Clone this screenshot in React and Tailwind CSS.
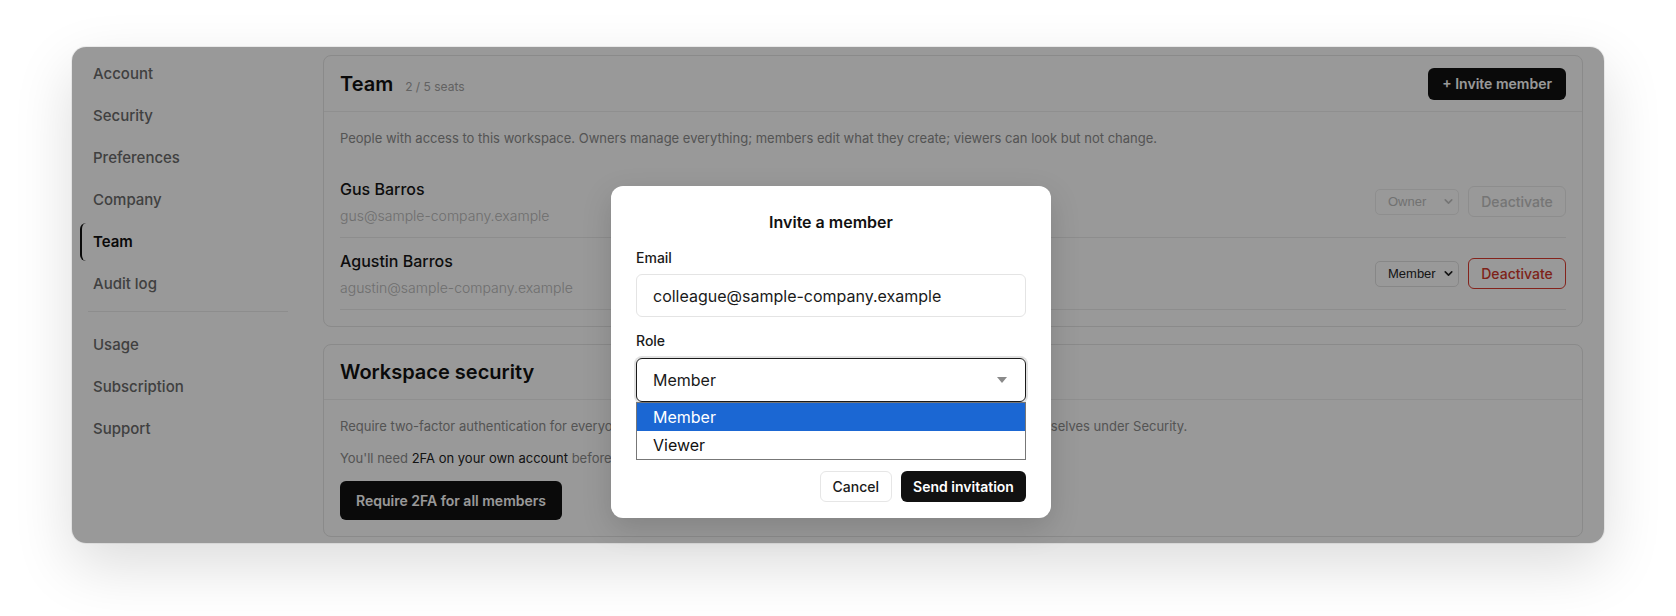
import React from 'react';
import { ChevronDown } from 'lucide-react';

const navTop = ['Account', 'Security', 'Preferences', 'Company', 'Team', 'Audit log'];
const navBottom = ['Usage', 'Subscription', 'Support'];

const members = [
  { name: 'Gus Barros', email: 'gus@sample-company.example', role: 'Owner', locked: true },
  { name: 'Agustin Barros', email: 'agustin@sample-company.example', role: 'Member', locked: false },
];

function NavItem({ label, active }) {
  return (
    <div
      className={`h-[38px] flex items-center pl-[11px] rounded-l-md border-l-2 text-[15px] ${
        active ? 'border-[#111] text-[#111] font-semibold' : 'border-transparent text-[#6b6b6b] font-medium'
      }`}
    >
      {label}
    </div>
  );
}

function MemberRow({ m }) {
  return (
    <div className="flex items-center justify-between border-b border-[#ececec] h-[72px] first:border-t">
      <div>
        <div className="text-[16px] leading-[22px] font-medium text-[#161616]">{m.name}</div>
        <div className="mt-[6px] text-[14px] leading-5 font-light text-[#b8b8b8]">{m.email}</div>
      </div>
      <div className="flex items-center gap-[9px]">
        <div
          className={`w-[84px] h-[26px] flex items-center justify-between pl-[12px] pr-[3px] rounded-[5px] border text-[13px] ${
            m.locked ? 'border-[#ededed] text-[#bdbdbd]' : 'border-[#e2e2e2] text-[#262626]'
          }`}
          style={{ fontFamily: '"Liberation Sans", Arial, sans-serif' }}
        >
          <span>{m.role}</span>
          <ChevronDown size={13} strokeWidth={3} className={m.locked ? 'text-[#c4c4c4]' : 'text-[#222]'} />
        </div>
        <button
          className={`h-[31px] w-[98px] rounded-[6px] border text-[14px] font-medium ${
            m.locked ? 'border-[#ececec] text-[#c4c4c4]' : 'border-[#dc3b2f] text-[#d33a2c]'
          }`}
        >
          Deactivate
        </button>
      </div>
    </div>
  );
}

export default function App() {
  return (
    <div className="min-h-screen bg-white pt-[47px] px-[72px] pb-[73px]" style={{ fontFamily: 'Inter, "Noto Sans", sans-serif' }}>
      <div className="relative rounded-[14px] bg-white shadow-[0_22px_60px_rgba(0,0,0,0.14),0_0_0_1px_rgba(0,0,0,0.06)] flex p-2 h-[496px]">
        {/* Sidebar */}
        <aside className="w-[220px] flex-shrink-0 flex flex-col gap-1">
          {navTop.map((l) => (
            <NavItem key={l} label={l} active={l === 'Team'} />
          ))}
          <div className="mt-1 mb-[10px] ml-2 mr-3 h-px bg-[#ececec]" />
          {navBottom.map((l) => (
            <NavItem key={l} label={l} />
          ))}
        </aside>

        {/* Main */}
        <main className="flex-1 pl-[23px] pr-[13px] flex flex-col gap-[17px]">
          <section className="rounded-lg border border-[#e6e6e6]">
            <div className="h-[56px] px-4 flex items-center justify-between border-b border-[#efefef]">
              <div className="flex items-baseline gap-3">
                <h2 className="text-[20px] font-semibold text-[#111]">Team</h2>
                <span className="text-[12px] text-[#a3a3a3]">2 / 5 seats</span>
              </div>
              <button className="h-[32px] px-[14px] rounded-[6px] bg-[#111] text-white text-[14px] font-semibold">
                + Invite member
              </button>
            </div>
            <div className="px-4 pt-4 pb-4">
              <p className="text-[13px] leading-5 text-[#8c8c8c] mb-[18px]">
                People with access to this workspace. Owners manage everything; members edit what they create; viewers can look but not change.
              </p>
              {members.map((m) => (
                <MemberRow key={m.email} m={m} />
              ))}
            </div>
          </section>

          <section className="rounded-lg border border-[#e6e6e6]">
            <div className="h-[55px] px-4 flex items-center border-b border-[#efefef]">
              <h2 className="text-[20px] font-semibold text-[#111]">Workspace security</h2>
            </div>
            <div className="px-4 pt-4 pb-4">
              <p className="text-[13px] leading-5 text-[#8c8c8c]">
                Require two-factor authentication for everyone in this workspace. Members without it will be asked to set it up themselves under Security.
              </p>
              <p className="mt-3 text-[13px] leading-5 text-[#8c8c8c]">
                You'll need <span className="text-[#222]">2FA on your own account</span> before you can turn this on.
              </p>
              <button className="mt-[13px] h-[39px] px-4 rounded-[6px] bg-[#111] text-white text-[14px] font-semibold">
                Require 2FA for all members
              </button>
            </div>
          </section>
        </main>

        {/* Overlay */}
        <div className="absolute inset-0 rounded-[14px] bg-black/40" />

        {/* Modal */}
        <div className="absolute left-[539px] top-[139px] w-[440px] h-[332px] rounded-[12px] bg-white px-[25px] pt-6 shadow-[0_10px_30px_rgba(0,0,0,0.15)]">
          <h3 className="text-center text-[16px] leading-6 font-semibold text-[#111]">Invite a member</h3>
          <label className="block mt-[14px] text-[14px] leading-5 font-medium text-[#1a1a1a]">Email</label>
          <div className="mt-[6px] h-[43px] rounded-[6px] border border-[#e4e4e4] flex items-center px-4 text-[16px] text-[#1a1a1a]">
            colleague@sample-company.example
          </div>
          <label className="block mt-[14px] text-[14px] leading-5 font-medium text-[#1a1a1a]">Role</label>
          <div className="relative mt-[7px]">
            <div className="h-[44px] rounded-[6px] border border-[#1a1a1a] shadow-[0_0_0_2px_#e2e2e2] flex items-center justify-between pl-4 pr-[18px] text-[16px] text-[#1a1a1a]">
              <span>Member</span>
              <svg width="10" height="6" viewBox="0 0 10 6">
                <path d="M0 0h10L5 6z" fill="#8a8a8a" />
              </svg>
            </div>
            <div className="absolute left-0 right-0 top-[44px] bg-white border border-[#777] text-[16px]">
              <div className="h-[28px] flex items-center pl-4 bg-[#1b67d3] text-white">Member</div>
              <div className="h-[28px] flex items-center pl-4 text-[#111]">Viewer</div>
            </div>
          </div>
          <div className="mt-[69px] flex justify-end gap-[9px]">
            <button className="h-[31px] px-3 rounded-[6px] border border-[#e6e6e6] text-[14px] font-medium text-[#1a1a1a]">
              Cancel
            </button>
            <button className="h-[31px] w-[125px] rounded-[6px] bg-[#111] text-white text-[14px] font-semibold">
              Send invitation
            </button>
          </div>
        </div>
      </div>
    </div>
  );
}
